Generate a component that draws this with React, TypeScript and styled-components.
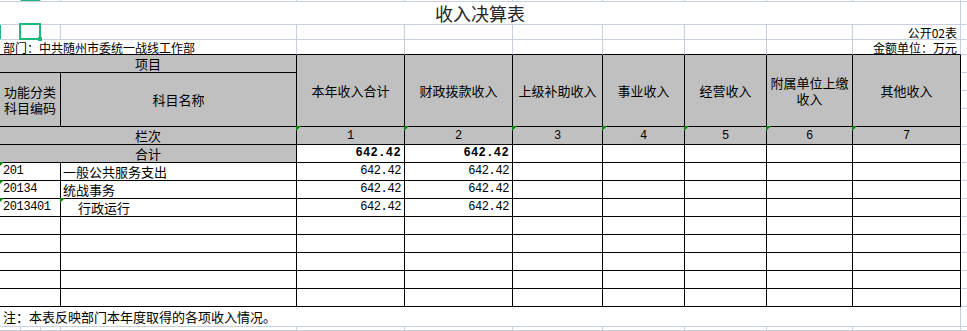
import React from "react";
import styled, { createGlobalStyle, css } from "styled-components";

// sheet colours
const GRID = "#c9cfe2";
const LINE = "#000000";
const HEAD_BG = "#c0c0c0";
const SELECT = "#21b67a";
const FLAG = "#0b850b";
const CJK = `"Noto Sans CJK SC", "Liberation Sans", sans-serif`;
const MONO = `"Liberation Mono", "DejaVu Sans Mono", monospace`;

const VALUE_COLS = [5, 6, 7, 8, 9, 10, 11];

const headers = [
  "本年收入合计",
  "财政拨款收入",
  "上级补助收入",
  "事业收入",
  "经营收入",
  "附属单位上缴\n收入",
  "其他收入",
];

const items = [
  { code: "201", name: "一般公共服务支出", indent: 0, flagName: false, values: ["642.42", "642.42"] },
  { code: "20134", name: "统战事务", indent: 0, flagName: false, values: ["642.42", "642.42"] },
  { code: "2013401", name: "行政运行", indent: 15, flagName: true, values: ["642.42", "642.42"] },
];

const GlobalStyle = createGlobalStyle`
  html, body {
    margin: 0;
    padding: 0;
    background: #ffffff;
  }
  body {
    font-family: ${CJK};
    color: #000000;
  }
`;

interface PlaceProps {
  $col: string | number;
  $row: string | number;
}

interface FlagProps {
  $flag?: boolean;
}

const flagMark = css`
  &::before {
    content: "";
    position: absolute;
    left: -1px;
    top: -1px;
    width: 0;
    height: 0;
    border-top: 5px solid ${FLAG};
    border-right: 5px solid transparent;
    z-index: 1;
  }
`;

const Sheet = styled.div`
  display: grid;
  width: 967px;
  height: 331px;
  overflow: hidden;
  grid-template-columns: 21px 20px 20px 236px 108px 108px 90px 82px 82px 86px 108px 6px;
  grid-template-rows: 2px 23px 15px 15px repeat(14, 18px) 20px 4px;
  background: #ffffff;
`;

const Cell = styled.div<PlaceProps>`
  grid-column: ${(p) => p.$col};
  grid-row: ${(p) => p.$row};
  box-sizing: border-box;
  position: relative;
  min-width: 0;
  display: flex;
  align-items: center;
  white-space: nowrap;
`;

const SheetCell = styled(Cell)<{ $tableTop?: boolean; $mark?: "top" | "left" }>`
  border-right: 1px solid ${GRID};
  border-bottom: 1px solid ${(p) => (p.$tableTop ? LINE : GRID)};
  ${(p) => p.$mark === "top" && css`box-shadow: inset 0 1px 0 ${SELECT};`}
  ${(p) => p.$mark === "left" && css`box-shadow: inset 1px 0 0 ${SELECT};`}
`;

const EdgeCell = styled(Cell)`
  border-bottom: 1px solid ${GRID};
`;

const TitleCell = styled(SheetCell)`
  justify-content: center;
  font-size: 18px;
  line-height: 22px;
  color: #262626;
`;

const MetaCell = styled(SheetCell)<{ $right?: boolean }>`
  justify-content: ${(p) => (p.$right ? "flex-end" : "flex-start")};
  padding: 0 3px;
  font-size: 12px;
  line-height: 13px;
`;

const SelectedCell = styled(SheetCell)`
  z-index: 2;
  &::after {
    content: "";
    position: absolute;
    left: -2px;
    top: -2px;
    right: -1px;
    bottom: -1px;
    border: 2px solid ${SELECT};
  }
  &::before {
    content: "";
    position: absolute;
    right: -2px;
    bottom: -2px;
    width: 4px;
    height: 4px;
    background: ${SELECT};
    z-index: 1;
  }
`;

const TableCell = styled(Cell)<FlagProps>`
  border-right: 1px solid ${LINE};
  border-bottom: 1px solid ${LINE};
  font-size: 13px;
  line-height: 17px;
  ${(p) => p.$flag && flagMark}
`;

const HeadCell = styled(TableCell)`
  background: ${HEAD_BG};
  justify-content: center;
  text-align: center;
  line-height: 16px;
`;

const IndexCell = styled(HeadCell)`
  font-family: ${MONO};
  font-size: 12px;
`;

const CodeCell = styled(TableCell)`
  padding-left: 3px;
  font-family: ${MONO};
  font-size: 12px;
  letter-spacing: -0.4px;
`;

const NameCell = styled(TableCell)<{ $indent?: number }>`
  padding-left: ${(p) => 2 + (p.$indent || 0)}px;
`;

const AmountCell = styled(TableCell)<{ $bold?: boolean }>`
  justify-content: flex-end;
  padding-right: 3px;
  font-family: ${MONO};
  font-size: 12px;
  font-weight: ${(p) => (p.$bold ? 700 : 400)};
  letter-spacing: ${(p) => (p.$bold ? 0.4 : -0.4)}px;
`;

const NoteCell = styled(SheetCell)`
  padding-left: 3px;
  font-size: 13px;
  line-height: 17px;
`;

const Label = styled.span`
  display: block;
`;

const multiLine = (text: string) =>
  text.split("\n").map((line, i) => <Label key={i}>{line}</Label>);

const BlankRow = ({ row, markCol }: { row: number; markCol?: number }) => (
  <>
    {Array.from({ length: 11 }, (_, i) => (
      <SheetCell key={i} $col={i + 1} $row={row} $mark={markCol === i + 1 ? "top" : undefined} />
    ))}
    <EdgeCell $col={12} $row={row} />
  </>
);

export default function App() {
  const emptyRows = [14, 15, 16, 17, 18];

  return (
    <>
      <GlobalStyle />
      <Sheet>
        <BlankRow row={1} markCol={2} />

        <TitleCell $col="1 / 12" $row={2}>收入决算表</TitleCell>
        <EdgeCell $col={12} $row={2} />

        <SheetCell $col={1} $row={3} $mark="left" />
        <SelectedCell $col={2} $row={3} />
        <SheetCell $col={3} $row={3} />
        {[4, 5, 6, 7, 8, 9, 10].map((c) => (
          <SheetCell key={c} $col={c} $row={3} />
        ))}
        <MetaCell $col={11} $row={3} $right>公开02表</MetaCell>
        <EdgeCell $col={12} $row={3} />

        <MetaCell $col="1 / 5" $row={4} $tableTop>部门：中共随州市委统一战线工作部</MetaCell>
        {[5, 6, 7, 8, 9, 10].map((c) => (
          <SheetCell key={c} $col={c} $row={4} $tableTop />
        ))}
        <MetaCell $col={11} $row={4} $tableTop $right>金额单位：万元</MetaCell>
        <EdgeCell $col={12} $row={4} />

        <HeadCell $col="1 / 5" $row={5}>项目</HeadCell>
        <HeadCell $col="1 / 4" $row="6 / 9">
          <div>{multiLine("功能分类\n科目编码")}</div>
        </HeadCell>
        <HeadCell $col="4 / 5" $row="6 / 9">科目名称</HeadCell>
        {headers.map((h, i) => (
          <HeadCell key={h} $col={VALUE_COLS[i]} $row="5 / 9">
            <div>{multiLine(h)}</div>
          </HeadCell>
        ))}
        {[5, 6, 7, 8].map((r) => (
          <EdgeCell key={r} $col={12} $row={r} />
        ))}

        <HeadCell $col="1 / 5" $row={9}>栏次</HeadCell>
        {VALUE_COLS.map((c, i) => (
          <IndexCell key={c} $col={c} $row={9} $flag>
            {i + 1}
          </IndexCell>
        ))}
        <EdgeCell $col={12} $row={9} />

        <HeadCell $col="1 / 5" $row={10}>合计</HeadCell>
        <AmountCell $col={5} $row={10} $bold>642.42</AmountCell>
        <AmountCell $col={6} $row={10} $bold>642.42</AmountCell>
        {VALUE_COLS.slice(2).map((c) => (
          <TableCell key={c} $col={c} $row={10} />
        ))}
        <EdgeCell $col={12} $row={10} />

        {items.map((item, idx) => {
          const row = 11 + idx;
          return (
            <React.Fragment key={item.code}>
              <CodeCell $col="1 / 4" $row={row} $flag>{item.code}</CodeCell>
              <NameCell $col={4} $row={row} $indent={item.indent} $flag={item.flagName}>
                {item.name}
              </NameCell>
              {VALUE_COLS.map((c, i) =>
                item.values[i] ? (
                  <AmountCell key={c} $col={c} $row={row}>{item.values[i]}</AmountCell>
                ) : (
                  <TableCell key={c} $col={c} $row={row} />
                )
              )}
              <EdgeCell $col={12} $row={row} />
            </React.Fragment>
          );
        })}

        {emptyRows.map((row) => (
          <React.Fragment key={row}>
            <TableCell $col="1 / 4" $row={row} />
            <TableCell $col={4} $row={row} />
            {VALUE_COLS.map((c) => (
              <TableCell key={c} $col={c} $row={row} />
            ))}
            <EdgeCell $col={12} $row={row} />
          </React.Fragment>
        ))}

        <NoteCell $col="1 / 12" $row={19}>注：本表反映部门本年度取得的各项收入情况。</NoteCell>
        <EdgeCell $col={12} $row={19} />

        <BlankRow row={20} />
      </Sheet>
    </>
  );
}
